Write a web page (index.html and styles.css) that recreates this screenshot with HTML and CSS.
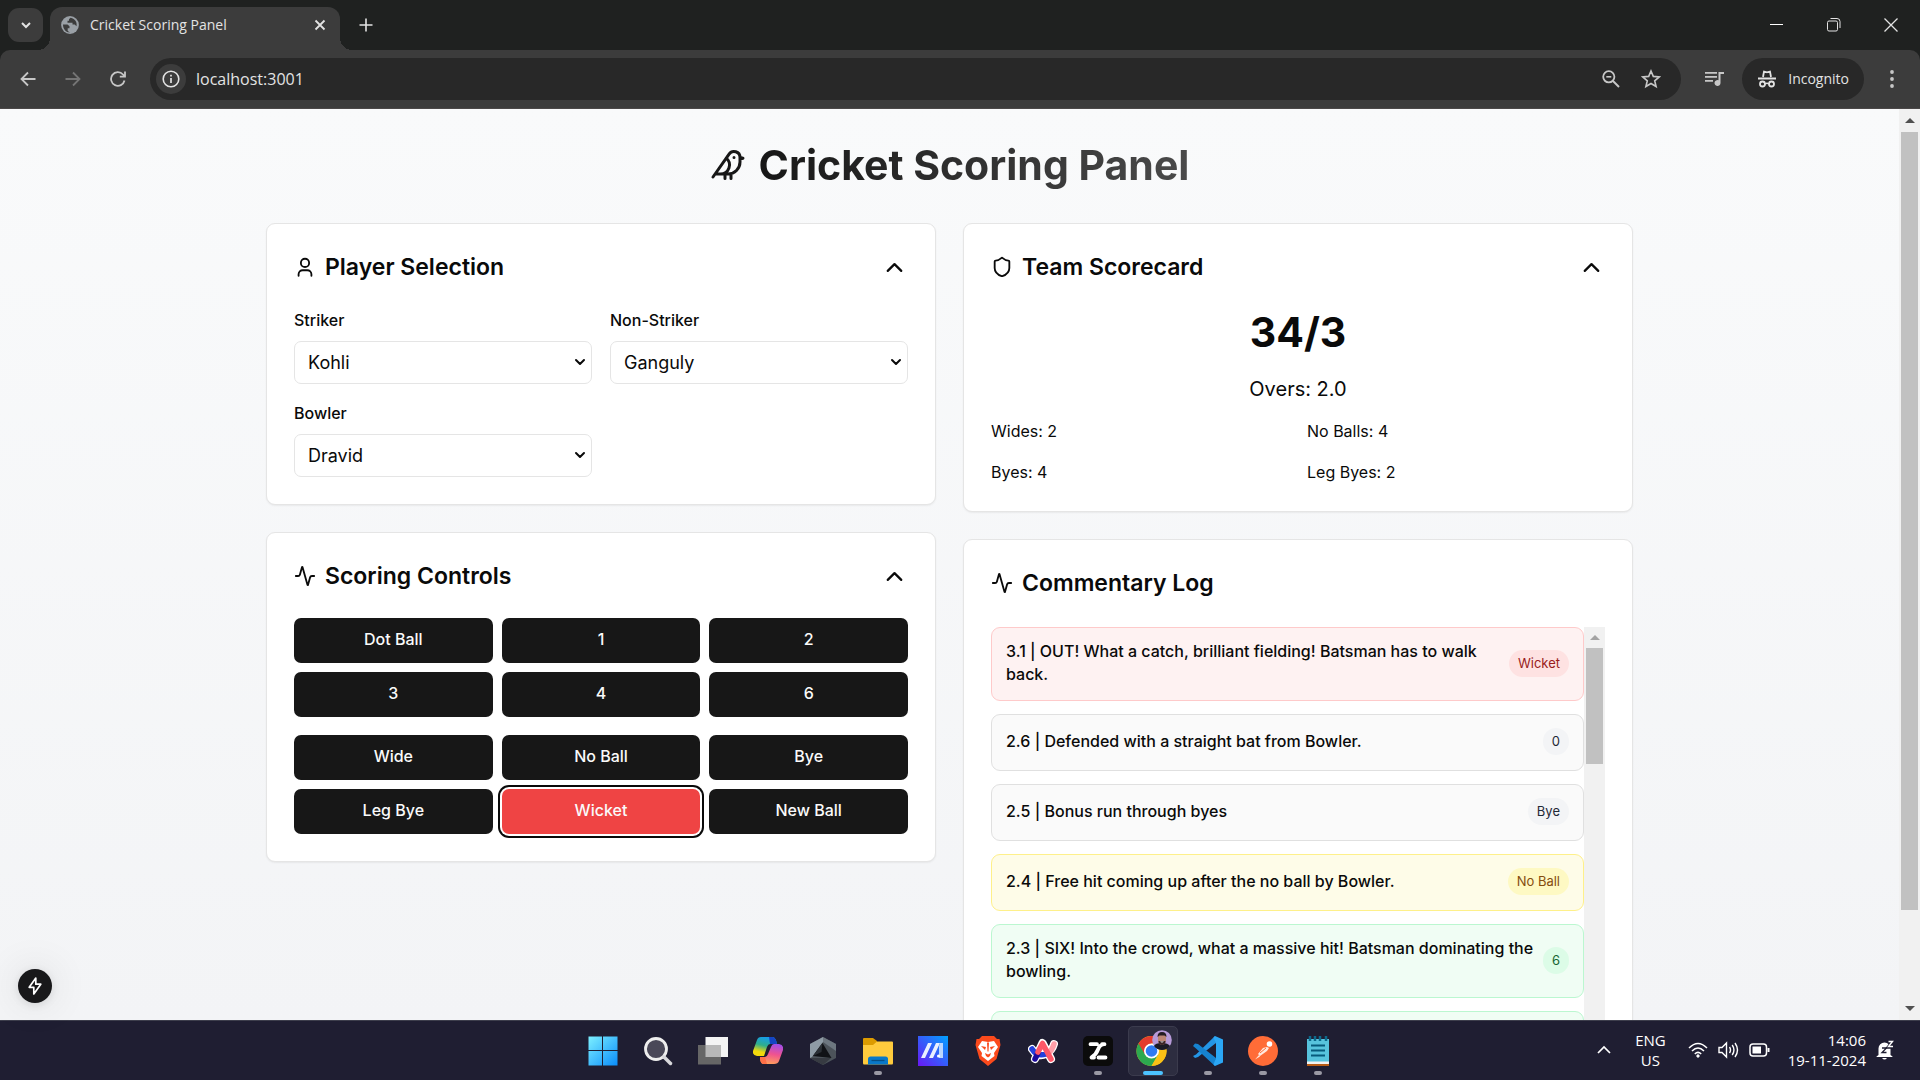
FILE: index.html
```html
<!DOCTYPE html>
<html lang="en">
<head>
<meta charset="utf-8">
<title>Cricket Scoring Panel</title>
<link rel="stylesheet" href="styles.css">
</head>
<body>
<svg class="defs" aria-hidden="true">
  <symbol id="chevron-up" viewBox="0 0 24 24"><path d="m18 15-6-6-6 6"/></symbol>
  <symbol id="chevron-down" viewBox="0 0 24 24"><path d="m6 9 6 6 6-6"/></symbol>
  <symbol id="activity" viewBox="0 0 24 24"><path d="M22 12h-2.48a2 2 0 0 0-1.93 1.46l-2.35 8.36a.25.25 0 0 1-.48 0L9.24 2.18a.25.25 0 0 0-.48 0l-2.35 8.36A2 2 0 0 1 4.49 12H2"/></symbol>
</svg>

<header class="browser">
  <div class="tabstrip">
    <button class="tab-search" aria-label="Search tabs"><svg class="line" width="16" height="16" viewBox="0 0 16 16"><path d="m4 6 4 4 4-4" stroke-width="2"/></svg></button>
    <div class="tab">
      <svg width="18" height="18" viewBox="0 0 18 18"><circle cx="9" cy="9" r="8.9" fill="#9aa0a6"/><path d="M2 8.500h4.500l2 1.800v2h-1.800v2.800L9 16.500c-4 0-7-3.500-7-8zM9.500 1.800 8 3.200v1.600H6.500v2h5v1.800h2.200l1.800 1.700c.8-3.500-1-7.500-6-8.500z" fill="#3c3c3c"/></svg>
      <span class="tab-title">Cricket Scoring Panel</span>
      <button class="plain" aria-label="Close tab"><svg class="line" width="12" height="12" viewBox="0 0 12 12"><path d="m1.500 1.500 9 9m0-9-9 9" stroke-width="1.800"/></svg></button>
    </div>
    <button class="plain new-tab" aria-label="New tab"><svg class="line" width="14" height="14" viewBox="0 0 14 14"><path d="M7 .5v13M.5 7h13" stroke-width="1.600"/></svg></button>
    <div class="window-buttons">
      <button class="plain" aria-label="Minimize"><svg class="line" width="14" height="14" viewBox="0 0 14 14"><path d="M0 6.500h13" stroke="#fff" stroke-width="1"/></svg></button>
      <button class="plain" aria-label="Restore"><svg class="line" width="14" height="14" viewBox="0 0 14 14"><rect x=".5" y="3" width="10" height="10" rx="1.500"/><path d="M3.500.5H10A3 3 0 0 1 13 3.500V10"/></svg></button>
      <button class="plain" aria-label="Close"><svg class="line" width="14" height="14" viewBox="0 0 14 14"><path d="m.5.5 13 13m0-13-13 13" stroke-width="1.300"/></svg></button>
    </div>
  </div>
  <div class="toolbar">
    <div class="nav">
      <button class="plain" aria-label="Back"><svg class="line" width="16" height="16" viewBox="0 0 16 16"><path d="M15.500 8H1.500m6.500-6.500L1.500 8 8 14.500" stroke-width="1.800"/></svg></button>
      <button class="plain dim" aria-label="Forward"><svg class="line" width="16" height="16" viewBox="0 0 16 16"><path d="M.5 8h14M8 1.500 14.500 8 8 14.500" stroke-width="1.800"/></svg></button>
      <button class="plain" aria-label="Reload"><svg class="line" width="16" height="16" viewBox="0 0 16 16"><path d="M14.500 9.500A6.800 6.800 0 1 1 13 3.500l1.700 2M15 .5v5.200H9.800" stroke-width="1.800"/></svg></button>
    </div>
    <div class="omnibox">
      <button class="plain site-info" aria-label="Site information"><svg class="line" width="18" height="18" viewBox="0 0 18 18"><circle cx="9" cy="9" r="7.800" stroke-width="1.600"/><path d="M9 8v5" stroke-width="1.700"/><path d="M9 4.800v1.700" stroke-width="1.700"/></svg></button>
      <input class="url" aria-label="Address" value="localhost:3001">
      <button class="plain" aria-label="Zoom"><svg class="line" width="18" height="18" viewBox="0 0 18 18"><circle cx="6.800" cy="6.800" r="5.600" stroke-width="1.800"/><path d="m11 11 6 6" stroke-width="2"/><path d="M4.300 6.800h5" stroke-width="1.600"/></svg></button>
      <button class="plain" aria-label="Bookmark"><svg class="line" width="20" height="20" viewBox="0 0 20 20"><path d="m10 2 2.300 5.400 5.900.5-4.500 3.900 1.400 5.700-5.100-3-5.100 3 1.400-5.700-4.500-3.900 5.900-.5z" stroke-width="1.600"/></svg></button>
    </div>
    <button class="plain media" aria-label="Media controls"><svg width="20" height="16" viewBox="0 0 20 16" fill="#c7c7c7"><path d="M0 1h12v1.800H0zM0 5h12v1.800H0zM0 9h8v1.800H0zM13.500 1H19v2h-3.500v9a3 3 0 1 1-2-2.800z"/></svg></button>
    <button class="incognito"><svg class="line" width="18" height="18" viewBox="0 0 18 18"><path d="M5 7 6 1.500l3 .8 3-.8L13 7M0 8.500h18" stroke-width="1.800"/><circle cx="4.500" cy="14" r="2.500" stroke-width="1.800"/><circle cx="13.500" cy="14" r="2.500" stroke-width="1.800"/><path d="M7 14q2-1.500 4 0" stroke-width="1.500"/></svg>Incognito</button>
    <button class="plain" aria-label="Menu"><svg width="4" height="18" viewBox="0 0 4 18" fill="#c7c7c7"><circle cx="2" cy="2" r="1.900"/><circle cx="2" cy="9" r="1.900"/><circle cx="2" cy="16" r="1.900"/></svg></button>
  </div>
</header>

<div class="viewport">
  <main class="page">
    <h1 class="page-title">
      <svg class="icon" width="36" height="36" viewBox="0 0 24 24"><path d="M16 7h.01M3.400 18H12a8 8 0 0 0 8-8V7a4 4 0 0 0-7.280-2.300L2 20M20 7l2 .5-2 .5M10 18v3M14 17.750V21M7 18a6 6 0 0 0 3.840-10.610"/></svg>
      <span>Cricket Scoring Panel</span>
    </h1>
    <div class="columns">
      <div class="column">
        <section class="card">
          <div class="card-header">
            <svg class="icon" width="22" height="22" viewBox="0 0 24 24"><circle cx="12" cy="7.500" r="4.500"/><path d="M19 21.500V20a4.500 4.500 0 0 0-4.500-4.500h-5A4.500 4.500 0 0 0 5 20v1.500"/></svg>
            <h2>Player Selection</h2>
            <button class="toggle" aria-label="Collapse"><svg class="icon" width="27" height="27"><use href="#chevron-up"/></svg></button>
          </div>
          <div class="fields">
            <div class="field"><label for="striker">Striker</label><div class="select"><select id="striker"><option>Kohli</option></select><svg class="icon" width="16" height="16"><use href="#chevron-down"/></svg></div></div>
            <div class="field"><label for="non-striker">Non-Striker</label><div class="select"><select id="non-striker"><option>Ganguly</option></select><svg class="icon" width="16" height="16"><use href="#chevron-down"/></svg></div></div>
            <div class="field"><label for="bowler">Bowler</label><div class="select"><select id="bowler"><option>Dravid</option></select><svg class="icon" width="16" height="16"><use href="#chevron-down"/></svg></div></div>
          </div>
        </section>
        <section class="card">
          <div class="card-header">
            <svg class="icon" width="22" height="22"><use href="#activity"/></svg>
            <h2>Scoring Controls</h2>
            <button class="toggle" aria-label="Collapse"><svg class="icon" width="27" height="27"><use href="#chevron-up"/></svg></button>
          </div>
          <div class="controls">
            <div class="pad">
              <button class="btn">Dot Ball</button><button class="btn">1</button><button class="btn">2</button>
              <button class="btn">3</button><button class="btn">4</button><button class="btn">6</button>
            </div>
            <div class="pad">
              <button class="btn">Wide</button><button class="btn">No Ball</button><button class="btn">Bye</button>
              <button class="btn">Leg Bye</button><button class="btn btn-danger">Wicket</button><button class="btn">New Ball</button>
            </div>
          </div>
        </section>
      </div>
      <div class="column">
        <section class="card">
          <div class="card-header">
            <svg class="icon" width="22" height="22" viewBox="0 0 24 24"><path d="M20 13c0 5-3.500 7.500-7.660 8.950a1 1 0 0 1-.67-.01C7.500 20.500 4 18 4 13V6a1 1 0 0 1 1-1c2 0 4.500-1.200 6.240-2.720a1.170 1.170 0 0 1 1.520 0C14.510 3.810 17 5 19 5a1 1 0 0 1 1 1z"/></svg>
            <h2>Team Scorecard</h2>
            <button class="toggle" aria-label="Collapse"><svg class="icon" width="27" height="27"><use href="#chevron-up"/></svg></button>
          </div>
          <p class="score">34/3</p>
          <p class="overs">Overs: 2.0</p>
          <div class="extras"><span>Wides: 2</span><span>No Balls: 4</span><span>Byes: 4</span><span>Leg Byes: 2</span></div>
        </section>
        <section class="card">
          <div class="card-header">
            <svg class="icon" width="22" height="22"><use href="#activity"/></svg>
            <h2>Commentary Log</h2>
          </div>
          <div class="log">
            <ul class="entries">
              <li class="entry red"><span class="entry-text">3.1 | OUT! What a catch, brilliant fielding! Batsman has to walk back.</span><span class="badge">Wicket</span></li>
              <li class="entry"><span class="entry-text">2.6 | Defended with a straight bat from Bowler.</span><span class="badge">0</span></li>
              <li class="entry"><span class="entry-text">2.5 | Bonus run through byes</span><span class="badge">Bye</span></li>
              <li class="entry yellow"><span class="entry-text">2.4 | Free hit coming up after the no ball by Bowler.</span><span class="badge">No Ball</span></li>
              <li class="entry green"><span class="entry-text">2.3 | SIX! Into the crowd, what a massive hit! Batsman dominating the bowling.</span><span class="badge">6</span></li>
              <li class="entry green"></li>
            </ul>
            <div class="scrollbar log-scrollbar"><i class="arrow-up"></i><i class="thumb"></i></div>
          </div>
        </section>
      </div>
    </div>
  </main>
  <div class="scrollbar page-scrollbar"><i class="arrow-up"></i><i class="thumb"></i><i class="arrow-down"></i></div>
  <button class="dev-button" aria-label="Developer tools"><svg width="20" height="20" viewBox="0 0 20 20" fill="none" stroke="#fff" stroke-width="1.700" stroke-linejoin="round"><path d="M10.800 2 4.200 11.300h4.600V18l7-9.800h-5z"/></svg></button>
</div>

<footer class="taskbar">
  <div></div>
  <div class="apps">
    <a class="app" href="#start" aria-label="Start"><svg width="30" height="30" viewBox="0 0 30 30"><defs><linearGradient id="win" x1="0" y1="0" x2="1" y2="1"><stop offset="0" stop-color="#7df0ff"/><stop offset="1" stop-color="#0a8dfb"/></linearGradient></defs><path fill="url(#win)" d="M.5.500H14V14H.5zM15 .5h14.500V14H15zM.5 15H14v14.500H.5zM15 15h14.500v14.500H15z"/></svg></a>
    <a class="app" href="#search" aria-label="Search"><svg width="30" height="30" viewBox="0 0 30 30"><circle cx="13" cy="13" r="10.500" fill="#4a4858" stroke="#eee" stroke-width="2.800"/><path d="m21 21 6.500 6.500" stroke="#d8d8dc" stroke-width="3.500" stroke-linecap="round"/></svg></a>
    <a class="app" href="#views" aria-label="Task view"><svg width="30" height="30" viewBox="0 0 30 30"><path d="M7.500 1H30v20H7.500z" fill="#f4f4f4"/><path d="M0 9h23v19.500H0z" fill="#666"/><path d="M7.500 9H23v12H7.500z" fill="#b8b8b8"/></svg></a>
    <a class="app" href="#copilot" aria-label="Copilot"><svg width="30" height="30" viewBox="0 0 30 30"><defs><linearGradient id="cpa" x1=".6" y1="0" x2=".3" y2="1"><stop offset="0" stop-color="#149cf0"/><stop offset=".45" stop-color="#2fae8c"/><stop offset=".8" stop-color="#f2d90c"/></linearGradient><linearGradient id="cpb" x1=".6" y1="0" x2=".4" y2="1"><stop offset="0" stop-color="#a34de8"/><stop offset=".5" stop-color="#f0538f"/><stop offset="1" stop-color="#ffa05c"/></linearGradient></defs><path d="M8 1h12q3 1 4 7h-7q-2 0-3 3l-3 9H4q-5-1-4-5L4 4q1-3 4-3z" fill="url(#cpa)"/><path d="M16 1h4q3 1 4 7h-7z" fill="#1544c4"/><path d="M21 28H10q-3-1-3-7h5q2 0 3-3l3-7q1-3 3-3h5q5 1 4 6l-4 11q-1 3-5 3z" fill="url(#cpb)"/><path d="M7 21h5l2 7h-4q-3-1-3-7z" fill="#ff7047"/></svg></a>
    <a class="app" href="#armoury" aria-label="Armoury"><svg width="30" height="30" viewBox="0 0 30 30"><path d="m15 1 13 7v14l-13 7-13-7V8z" fill="#4c535a"/><path d="M15 1v5L4 21l-2 1V8z" fill="#8e9ba5"/><path d="M15 1 28 8v7L15 6z" fill="#6d7780"/><path d="m14.500 7 9 15L5 20z" fill="#101216"/><path d="m14.500 7-1 9L5 20z" fill="#2b3036"/><path d="m2 22 21 0-8 7z" fill="#373b42"/></svg></a>
    <a class="app running" href="#files" aria-label="File Explorer"><svg width="30" height="30" viewBox="0 0 30 30"><path d="M0 3q0-1 1-1h9l4 3v6H0z" fill="#dc9b00"/><path d="M0 9h10l4-3.500h15q1 0 1 1V27q0 1.500-1 1.500H1Q0 28.500 0 27z" fill="#ffcb3d"/><path d="M5 28.500V23q0-2.500 2.500-2.500h15Q25 20.500 25 23v5.500z" fill="#0a78c8"/><path d="M8.500 24.500h13" stroke="#064f86" stroke-width="1.300"/></svg></a>
    <a class="app" href="#myasus" aria-label="MyASUS"><svg width="30" height="30" viewBox="0 0 30 30"><defs><linearGradient id="ma" x1="1" y1="0" x2="0" y2="1"><stop offset="0" stop-color="#00a3ff"/><stop offset="1" stop-color="#6a17f5"/></linearGradient></defs><path d="M0 0h30v30H0z" fill="url(#ma)"/><path d="M3 22 10 7h4L7 22zM11 22l7-15h4l-7 15z" fill="#eaf0ff"/><path d="M22 7h3v15h-4V10z" fill="#b9d7ff"/><circle cx="20.500" cy="20" r="1.500" fill="#fff"/></svg></a>
    <a class="app" href="#brave" aria-label="Brave"><svg width="30" height="30" viewBox="0 0 30 30"><path d="M9 0h12l3 3 2.500 0 1 6-4 14-8.500 7-8.500-7-4-14 1-6L6 3z" fill="#fb4a1c"/><path d="m9 5 6 1 6-1 4 6-4 6 .5 3-6.500 5-6.500-5L9 17l-4-6z" fill="#fff"/><path d="m8 10 5 1-1 3zM22 10l-5 1 1 3zM12 17l3 1.500 3-1.500-1 3-2 1.500-2-1.500zM14 6.500h2l-.5 9h-1z" fill="#fb4a1c"/></svg></a>
    <a class="app" href="#arc" aria-label="Arc"><svg width="30" height="30" viewBox="0 0 30 30" fill="none" stroke-linecap="round" stroke-linejoin="round"><path d="M7 23 14.500 7 23 23M4 13q6 9 14 5 6-3 8-10" stroke="#fff" stroke-width="8"/><path d="M26 8q-2 7-7 10" stroke="#ff9fa8" stroke-width="5.500"/><path d="M4 13q5 8 14 5" stroke="#2440dc" stroke-width="5.500"/><path d="m7 23 3-6" stroke="#1c0a9c" stroke-width="5.500"/><path d="m10 16 4.500-8.500L23 23" stroke="#ff5767" stroke-width="5.500"/></svg></a>
    <a class="app running" href="#zed" aria-label="Z editor"><svg width="30" height="30" viewBox="0 0 30 30"><rect width="30" height="30" rx="5" fill="#0b0b0b"/><path d="M7.500 8.200h6.500M19 8.200h2.500Q17 8.200 15 13.500T8.500 21.500H11M15.500 21.500h7" fill="none" stroke="#fff" stroke-width="3.800" stroke-linecap="round" stroke-linejoin="round"/></svg></a>
    <a class="app running active" href="#chrome" aria-label="Chrome"><svg width="38" height="36" viewBox="0 0 38 36"><circle cx="17.500" cy="21" r="15" fill="#fbc116"/><path d="M17.500 21 4.500 13.500a15 15 0 0 0 13 22.500z" fill="#2da94f"/><path d="m17.500 21 6.500 4-6.500 11Q10 30 10.500 24z" fill="#2da94f"/><path d="m17.500 21-6.500 3.500-6.500-11a15 15 0 0 1 26 0H17.500z" fill="#e33b2e"/><path d="M17.500 13.500h13A15 15 0 0 1 17.500 36l6.500-11z" fill="#fbc116"/><circle cx="17.500" cy="21" r="7.500" fill="#fff"/><circle cx="17.500" cy="21" r="5.800" fill="#2f7bf2"/><circle cx="28" cy="10" r="9.800" fill="#b79ad8"/><path d="M20 16q1-3 8-3 6 0 8 3a10 10 0 0 1-16 0z" fill="#1b1a24"/><path d="M24 5h8v6q-1 4-4 4t-4-4z" fill="#bd8675"/><path d="M23.500 7q0-5 4.500-5t4.500 5l-2-1.500h-5z" fill="#241b22"/><path d="M24.500 11h7q0 4-3.500 4t-3.500-4z" fill="#3b2527"/><path d="M26 11.500h4q-2 2-4 0z" fill="#fff"/></svg></a>
    <a class="app running" href="#code" aria-label="Visual Studio Code"><svg width="30" height="30" viewBox="0 0 30 30"><path d="M22 0 3 18.500 0 20l2 2 3-1L23 7z" fill="#2496e6"/><path d="m0 10 2-2.500 3 .5L23 22l-1 8L3 12.500z" fill="#1683d0"/><path d="m22 0 8 3.500v23L22 30l-1.500-1.500L23 22V7.500L20.500 1.500z" fill="#2ba7f5"/></svg></a>
    <a class="app running" href="#postman" aria-label="Postman"><svg width="30" height="30" viewBox="0 0 30 30"><circle cx="15" cy="15" r="15" fill="#ff6c37"/><circle cx="21.500" cy="8" r="2.800" fill="#fff"/><path d="m19 11-4 1-5 6 2 2 7-5 2-3zM11 19l-4 4.500 5-3z" fill="#ffe9df"/><path d="m12 17 6-5" stroke="#ff6c37"/></svg></a>
    <a class="app running" href="#notepad" aria-label="Notepad"><svg width="24" height="30" viewBox="0 0 24 30"><path d="M1 3h22v25H1z" fill="#57c3dd"/><path d="M1 25.500h22V28H1z" fill="#f2f2f2"/><path d="M1 28h22v2H1z" fill="#b85c16"/><path d="M4 0v5M9 0v5M14 0v5M20 0v5" stroke="#0c6a8c" stroke-width="2.500"/><path d="M5 9.500h14M5 14.500h14M5 19.500h14" stroke="#075a7c" stroke-width="2"/></svg></a>
  </div>
  <div class="tray">
    <svg class="line tray-chevron" width="16" height="16" viewBox="0 0 16 16"><path d="m2 11 6-6 6 6" stroke-width="1.700"/></svg>
    <span class="lang">ENG<br>US</span>
    <svg class="line" width="20" height="18" viewBox="0 0 20 18"><path d="M1 7q9-9 18 0M4 10q6-6 12 0M6.800 13q3.200-3.200 6.400 0" stroke-width="1.500"/><circle cx="10" cy="15" r="1.200" fill="#fff"/></svg>
    <svg class="line" width="21" height="18" viewBox="0 0 21 18"><path d="M1 6.500h3L8.500 2v14L4 11.500H1zM11.500 6q2 3 0 6M14.200 4q3.500 5 0 10M17 2q5 7 0 14" stroke-width="1.400"/></svg>
    <svg class="line" width="21" height="14" viewBox="0 0 21 14"><rect x="1" y="1" width="16.500" height="12" rx="3" stroke-width="1.500"/><path d="M3.500 3.500H12v7H3.500z" fill="#fff" stroke="none"/><path d="M19.500 5v4" stroke-width="2"/></svg>
    <span class="clock">14:06<br>19-11-2024</span>
    <svg class="bell" width="18" height="20" viewBox="0 0 18 20"><path d="M2.500 15V8.500a6 6 0 0 1 12 0V15l2 1.500v.5H.5v-.5zM6 18h5q-2.500 3-5 0z" fill="#fff"/><path d="M6 8h4.500L6 12.500h4.500" fill="none" stroke="#1f1e32" stroke-width="1.300"/><path d="M12 1.500h5L12.500 7H17" fill="none" stroke="#1f1e32" stroke-width="3.500"/><path d="M12.500 1.500h4L12.500 6.500H17" fill="none" stroke="#fff" stroke-width="1.400"/></svg>
  </div>
</footer>
</body>
</html>
```
FILE: styles.css
```css
* { box-sizing: border-box; }

body {
  margin: 0;
  height: 100vh;
  display: flex;
  flex-direction: column;
  overflow: hidden;
  font-family: Inter, "Liberation Sans", sans-serif;
  color: #0a0a0a;
}

button, input, select { font: inherit; color: inherit; }
h1, h2, p, ul { margin: 0; padding: 0; }
svg { display: block; flex: none; }
.defs { position: absolute; width: 0; height: 0; }
.icon { fill: none; stroke: currentColor; stroke-width: 2; stroke-linecap: round; stroke-linejoin: round; }
.line { fill: none; stroke: currentColor; }
.plain { border: 0; padding: 0; background: none; display: grid; place-items: center; flex: none; }

/* Browser frame */
.browser { background: #1f2120; color: #e3e3e3; font-family: "Open Sans", "Noto Sans", sans-serif; flex: none; }
.tabstrip { height: 50px; display: flex; align-items: flex-end; padding-left: 8px; }
.tab-search { width: 35px; height: 34px; margin: 0 7px 8px 0; padding: 0; border: 0; border-radius: 11px; background: #3c3c3c; display: grid; place-items: center; }
.tab { width: 290px; height: 43px; padding: 0 14px 8px 11px; border-radius: 12px 12px 0 0; background: #3c3c3c; display: flex; align-items: center; gap: 11px; position: relative; }
.tab::before, .tab::after { content: ""; position: absolute; bottom: 0; width: 12px; height: 12px; }
.tab::before { left: -12px; background: radial-gradient(circle at 0 0, transparent 12px, #3c3c3c 12px); }
.tab::after { right: -12px; background: radial-gradient(circle at 100% 0, transparent 12px, #3c3c3c 12px); }
.tab-title { flex: 1; font-size: 14px; line-height: 20px; white-space: nowrap; }
.new-tab { margin: 0 0 18px 19px; }
.window-buttons { margin: 0 22px 18px auto; display: flex; gap: 43px; }
.toolbar { height: 59px; padding: 0 26px 1px 20px; border-bottom: 1px solid #4b4848; border-radius: 10px 10px 0 0; background: #3c3c3c; display: flex; align-items: center; color: #c7c7c7; }
.nav { display: flex; gap: 29px; margin-right: 24px; }
.dim { color: #757575; }
.omnibox { flex: 1; height: 42px; padding: 0 20px 0 6px; border-radius: 21px; background: #282828; display: flex; align-items: center; gap: 21px; }
.site-info { width: 30px; height: 30px; border-radius: 50%; background: #3c3c3c; color: #e3e3e3; margin-right: -11px; }
.url { flex: 1; min-width: 0; border: 0; padding: 0; background: none; font-size: 16px; color: #e3e3e3; }
.media { margin: 0 17px 0 24px; }
.incognito { height: 42px; padding: 0 15px 0 16px; margin-right: 26px; border: 0; border-radius: 21px; background: #282828; color: #e3e3e3; display: flex; align-items: center; gap: 12px; font-size: 14px; }

/* Page */
.viewport { flex: 1; min-height: 0; display: flex; position: relative; background: linear-gradient(#f9fafb, #f3f4f6); }
.page { flex: 1; min-width: 0; overflow: hidden; padding: 32px 36px 0; }
.page-title { display: flex; justify-content: center; align-items: center; gap: 13px; margin-bottom: 34px; font-size: 41px; line-height: 48px; font-weight: 700; color: #171717; }
.page-title span { background: linear-gradient(90deg, #171717, #4a4a4a); background-clip: text; color: transparent; }
.columns { max-width: 1367px; margin: 0 auto; display: grid; grid-template-columns: 1fr 1fr; gap: 27px; align-items: start; }
.column { display: grid; gap: 27px; }
.card { padding: 26px 27px 27px; border: 1px solid #e5e5e5; border-radius: 9px; background: #fff; box-shadow: 0 1px 2px rgba(0, 0, 0, .06); }
.card-header { height: 34px; margin-bottom: 25px; display: flex; align-items: center; gap: 9px; }
.card-header h2 { flex: 1; font-size: 23px; line-height: 32px; font-weight: 600; }
.toggle { width: 27px; height: 27px; padding: 0; border: 0; background: none; }

.fields { display: grid; grid-template-columns: 1fr 1fr; gap: 18px; }
.field { display: grid; gap: 9px; }
.field label { font-size: 16px; line-height: 23px; font-weight: 500; }
.select { position: relative; }
.select select { display: block; width: 100%; height: 43px; padding: 0 32px 0 13px; border: 1px solid #e5e5e5; border-radius: 7px; background: #fff; appearance: none; font-size: 18px; }
.select .icon { position: absolute; right: 4px; top: 13px; stroke-width: 3; pointer-events: none; }

.controls { display: grid; gap: 18px; }
.pad { display: grid; grid-template-columns: repeat(3, 1fr); gap: 9px; }
.btn { height: 45px; padding: 0 18px 4px; border: 0; border-radius: 7px; background: #171717; color: #fafafa; font-size: 16px; font-weight: 500; }
.btn-danger { background: #ef4444; box-shadow: 0 0 0 2px #fff, 0 0 0 4px #0a0a0a; }

.score { padding-top: 1px; font-size: 41px; line-height: 45px; font-weight: 700; text-align: center; }
.overs { margin: 18px 0 15px; font-size: 20px; line-height: 32px; text-align: center; }
.extras { display: grid; grid-template-columns: 1fr 1fr; gap: 18px; font-size: 16px; line-height: 23px; }

.log { display: flex; height: 675px; margin-top: 27px; overflow: hidden; }
.entries { flex: 1; list-style: none; display: flex; flex-direction: column; gap: 13px; }
.entry { min-height: 57px; padding: 12px 14px 14px; border: 1px solid #e0e0e0; border-radius: 9px; background: #fafafa; display: flex; align-items: center; gap: 9px; }
.entry-text { flex: 1; font-size: 16px; line-height: 23px; font-weight: 500; }
.badge { padding: 0 9px; border-radius: 14px; background: #f3f4f6; color: #1f2937; font-size: 13px; line-height: 27px; white-space: nowrap; }
.red { background: #fef2f2; border-color: #fecaca; }
.red .badge { background: #fee2e2; color: #991b1b; }
.yellow { background: #fefce8; border-color: #fef08a; }
.yellow .badge { background: #fef9c3; color: #854d0e; }
.green { background: #f0fdf4; border-color: #bbf7d0; }
.green .badge { background: #dcfce7; color: #166534; }

.scrollbar { flex: none; width: 21px; padding: 8px 2px; background: #f1f1f1; display: flex; flex-direction: column; align-items: center; gap: 8px; }
.thumb { width: 17px; background: #c1c1c1; }
.arrow-up, .arrow-down { width: 0; height: 0; border: 5px solid transparent; }
.arrow-up { border-top: 0; border-bottom-color: #505050; }
.arrow-down { border-bottom: 0; border-top-color: #505050; margin: auto 0 1px; }
.log-scrollbar .arrow-up { border-bottom-color: #a3a3a3; }
.log-scrollbar .thumb { height: 116px; }
.page-scrollbar { padding: 9px 2px 8px; gap: 9px; }
.page-scrollbar .thumb { height: 87%; }
.dev-button { position: absolute; left: 18px; bottom: 17px; width: 34px; height: 34px; padding: 0; border: 0; border-radius: 50%; background: #18181a; box-shadow: 0 0 40px rgba(0, 0, 0, .12), 0 2px 8px rgba(0, 0, 0, .1); display: grid; place-items: center; }

/* Taskbar */
.taskbar { flex: none; height: 60px; border-top: 1px solid #3d3e4c; background: #1f1e32; color: #fff; display: grid; grid-template-columns: 1fr auto 1fr; font-family: "Open Sans", "Noto Sans", sans-serif; }
.apps { display: flex; align-items: center; gap: 5px; }
.app { width: 50px; height: 50px; border-radius: 5px; display: grid; place-items: center; position: relative; }
.running::after { content: ""; position: absolute; left: 21px; bottom: 1px; width: 8px; height: 4px; border-radius: 2px; background: #9a99a4; }
.active { background: #2d2d40; border: 1px solid #3b3b4d; }
.active svg { margin-bottom: 6px; }
.active::after { left: 14px; bottom: 0; width: 20px; background: #4cc2ff; }
.tray { display: flex; align-items: center; justify-content: flex-end; padding: 0 26px 2px 0; gap: 10px; font-size: 15px; line-height: 20px; }
.tray-chevron { margin-right: 13px; }
.lang { text-align: center; margin-right: 12px; }
.clock { text-align: right; margin-left: 8px; }
```
